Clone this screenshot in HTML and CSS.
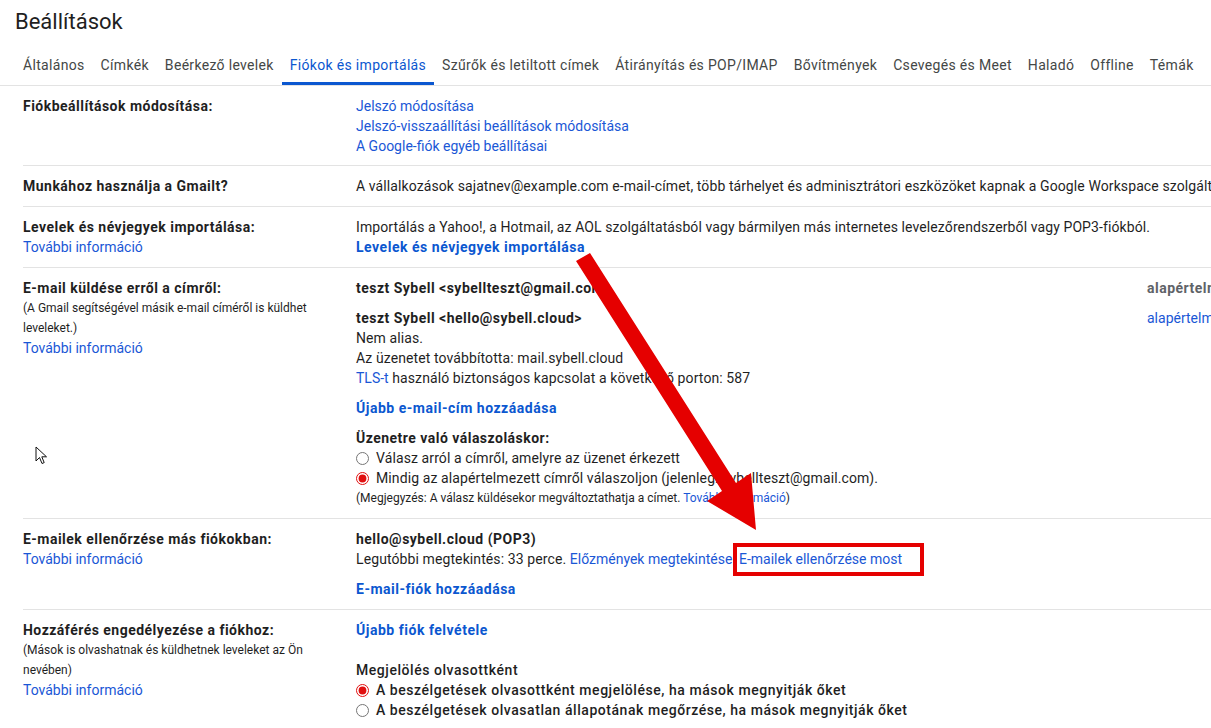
FILE: index.html
```html
<!DOCTYPE html>
<html lang="hu">
<head>
    <meta charset="UTF-8">
    <title>Beállítások</title>
    <link rel="stylesheet" href="styles.css">
</head>
<body>
    <div class="page">
        <h1 class="title">Beállítások</h1>
        <nav class="tabs">
            <a class="tab">Általános</a>
            <a class="tab">Címkék</a>
            <a class="tab">Beérkező levelek</a>
            <a class="tab active">Fiókok és importálás</a>
            <a class="tab">Szűrők és letiltott címek</a>
            <a class="tab">Átirányítás és POP/IMAP</a>
            <a class="tab">Bővítmények</a>
            <a class="tab">Csevegés és Meet</a>
            <a class="tab">Haladó</a>
            <a class="tab">Offline</a>
            <a class="tab">Témák</a>
        </nav>

        <div class="row first">
            <div class="label"><b>Fiókbeállítások módosítása:</b></div>
            <div class="value">
                <a class="link">Jelszó módosítása</a><br>
                <a class="link">Jelszó-visszaállítási beállítások módosítása</a><br>
                <a class="link">A Google-fiók egyéb beállításai</a>
            </div>
        </div>

        <div class="row">
            <div class="label"><b>Munkához használja a Gmailt?</b></div>
            <div class="value nowrap">A vállalkozások sajatnev@example.com e-mail-címet, több tárhelyet és adminisztrátori eszközöket kapnak a Google Workspace szolgáltatással.</div>
        </div>

        <div class="row">
            <div class="label">
                <b>Levelek és névjegyek importálása:</b><br>
                <a class="link">További információ</a>
            </div>
            <div class="value">
                Importálás a Yahoo!, a Hotmail, az AOL szolgáltatásból vagy bármilyen más internetes levelezőrendszerből vagy POP3-fiókból.<br>
                <a class="link strong">Levelek és névjegyek importálása</a>
            </div>
        </div>

        <div class="row">
            <div class="label">
                <b>E-mail küldése erről a címről:</b>
                <div class="note">(A Gmail segítségével másik e-mail címéről is küldhet leveleket.)</div>
                <a class="link">További információ</a>
            </div>
            <div class="value">
                <div class="sender">
                    <div><b>teszt Sybell &lt;sybellteszt@gmail.com&gt;</b></div>
                    <div class="side grey"><b>alapértelmezett</b></div>
                </div>
                <div class="sender">
                    <div>
                        <b>teszt Sybell &lt;hello@sybell.cloud&gt;</b><br>
                        Nem alias.<br>
                        Az üzenetet továbbította: mail.sybell.cloud<br>
                        <a class="link">TLS-t</a> használó biztonságos kapcsolat a következő porton: 587
                    </div>
                    <div class="side"><a class="link">alapértelmezettként beállítás</a></div>
                </div>
                <a class="link strong">Újabb e-mail-cím hozzáadása</a>
                <div class="block">
                    <b>Üzenetre való válaszoláskor:</b>
                    <label class="option"><input type="radio" name="reply"> Válasz arról a címről, amelyre az üzenet érkezett</label>
                    <label class="option"><input type="radio" name="reply" checked> Mindig az alapértelmezett címről válaszoljon (jelenleg: sybellteszt@gmail.com).</label>
                    <div class="note">(Megjegyzés: A válasz küldésekor megváltoztathatja a címet. <a class="link">További információ</a>)</div>
                </div>
            </div>
        </div>

        <div class="row">
            <div class="label">
                <b>E-mailek ellenőrzése más fiókokban:</b><br>
                <a class="link">További információ</a>
            </div>
            <div class="value">
                <b>hello@sybell.cloud (POP3)</b><br>
                Legutóbbi megtekintés: 33 perce. <a class="link">Előzmények megtekintése</a> <a class="link check">E-mailek ellenőrzése most</a>
                <div class="block"><a class="link strong">E-mail-fiók hozzáadása</a></div>
            </div>
        </div>

        <div class="row last">
            <div class="label">
                <b>Hozzáférés engedélyezése a fiókhoz:</b>
                <div class="note">(Mások is olvashatnak és küldhetnek leveleket az Ön nevében)</div>
                <a class="link">További információ</a>
            </div>
            <div class="value">
                <a class="link strong">Újabb fiók felvétele</a>
                <div class="block wide">
                    <span class="medium">Megjelölés olvasottként</span>
                    <label class="option medium"><input type="radio" name="read" checked> A beszélgetések olvasottként megjelölése, ha mások megnyitják őket</label>
                    <label class="option medium"><input type="radio" name="read"> A beszélgetések olvasatlan állapotának megőrzése, ha mások megnyitják őket</label>
                </div>
            </div>
        </div>

        <!-- annotation drawn over the screenshot -->
        <svg class="arrow" width="1211" height="728" viewBox="0 0 1211 728">
            <polygon points="576,261 590,253 736,483 751,473 756,530 707,501 722,491" fill="#e50000"/>
        </svg>
        <div class="highlight"></div>
        <svg class="cursor" width="14" height="20" viewBox="0 0 14 20">
            <path d="M1 1 L1 15 L4.5 11.5 L7 17.5 L9.2 16.6 L6.8 10.8 L11.5 10.8 Z" fill="#fff" stroke="#111" stroke-width="1" stroke-linejoin="round"/>
        </svg>
    </div>
</body>
</html>
```

FILE: styles.css
```css
body {
    margin: 0;
    font-family: Roboto, "Liberation Sans", sans-serif;
    font-size: 14px;
    line-height: 20px;
    letter-spacing: 0.1px;
    color: #1f1f1f;
    background: #fff;
    overflow: hidden;
}

.page {
    position: relative;
    width: 1400px;
}

.title {
    margin: 0;
    padding-left: 15px;
    height: 45px;
    line-height: 44px;
    font-size: 22px;
    font-weight: 400;
    letter-spacing: 0;
    color: #1f1f1f;
}

.tabs {
    display: flex;
    padding-left: 15px;
    border-bottom: 1px solid #e3e3e3;
    height: 40px;
}

.tab {
    padding: 0 8px;
    line-height: 40px;
    letter-spacing: 0.32px;
    color: #444746;
    white-space: nowrap;
    box-sizing: border-box;
}

.tab.active {
    color: #0b57d0;
    border-bottom: 3px solid #0b57d0;
    height: 40px;
}

.row {
    display: grid;
    grid-template-columns: 333px 1fr;
    margin-left: 23px;
    padding: 10px 0;
    border-bottom: 1px solid #e3e3e3;
}

.row.first {
    padding-bottom: 9px;
}

.row.last {
    border-bottom: none;
}

.label {
    padding-right: 20px;
}

.label b,
.value b {
    font-weight: 700;
    letter-spacing: 0.48px;
}

.note {
    font-size: 12px;
    line-height: 20px;
    letter-spacing: 0;
}

.link {
    color: #1a57d6;
    letter-spacing: 0;
    cursor: pointer;
}

.link.strong {
    font-weight: 700;
    letter-spacing: 0.52px;
    color: #0b57d0;
}

.link.check {
    margin-left: 3px;
}

.nowrap {
    white-space: nowrap;
}

.sender {
    display: grid;
    grid-template-columns: 791px auto;
    margin-bottom: 10px;
    white-space: nowrap;
}

.grey {
    color: #5f6368;
}

.block {
    margin-top: 10px;
}

.block.wide {
    margin-top: 20px;
}

.option {
    display: flex;
    align-items: center;
    gap: 7px;
}

.option input {
    margin: 0;
    width: 13px;
    height: 13px;
    accent-color: #e01010;
}

.medium {
    font-weight: 500;
    letter-spacing: 0.55px;
}

.arrow {
    position: absolute;
    left: 0;
    top: 0;
    pointer-events: none;
}

.highlight {
    position: absolute;
    left: 733px;
    top: 543px;
    width: 183px;
    height: 25px;
    border: 4px solid #e50000;
}

.cursor {
    position: absolute;
    left: 35px;
    top: 446px;
}
```
